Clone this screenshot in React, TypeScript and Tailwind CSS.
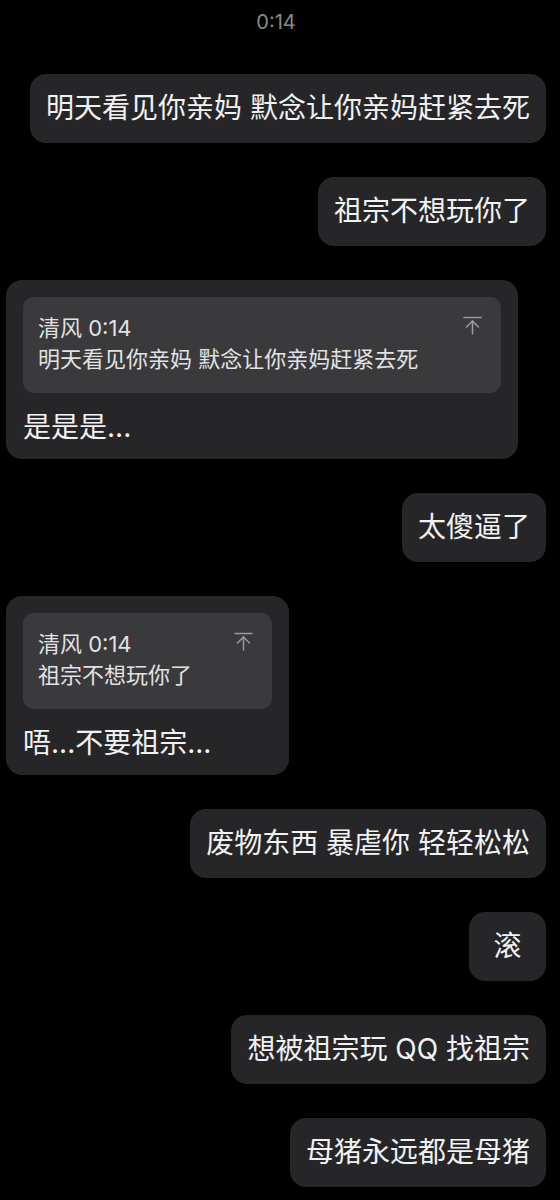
type Msg =
  | { kind: "out"; text: string }
  | { kind: "reply"; text: string; quoteName: string; quoteText: string; width: string };

const messages: Msg[] = [
  { kind: "out", text: "明天看见你亲妈 默念让你亲妈赶紧去死" },
  { kind: "out", text: "祖宗不想玩你了" },
  {
    kind: "reply",
    quoteName: "清风 0:14",
    quoteText: "明天看见你亲妈 默念让你亲妈赶紧去死",
    text: "是是是...",
    width: "w-[512px]",
  },
  { kind: "out", text: "太傻逼了" },
  {
    kind: "reply",
    quoteName: "清风 0:14",
    quoteText: "祖宗不想玩你了",
    text: "唔...不要祖宗...",
    width: "w-[283px]",
  },
  { kind: "out", text: "废物东西 暴虐你 轻轻松松" },
  { kind: "out", text: "滚" },
  { kind: "out", text: "想被祖宗玩 QQ 找祖宗" },
  { kind: "out", text: "母猪永远都是母猪" },
];

// "jump to original" glyph: bar on top, arrow pointing up
function JumpIcon() {
  return (
    <svg width="19" height="19" viewBox="0 0 19 19" fill="none" stroke="#9c9ca0" strokeWidth="1.5" strokeLinecap="round" strokeLinejoin="round">
      <path d="M1 1.5h17" />
      <path d="M9.5 5v13" />
      <path d="M3.5 11l6-6 6 6" />
    </svg>
  );
}

function OutBubble({ text }: { text: string }) {
  return (
    <div className="flex justify-end">
      <div className="min-w-[77px] rounded-[16px] bg-[#262628] px-4 py-4 text-center text-[28px] leading-[37px] text-[#f2f2f2] whitespace-pre">
        {text}
      </div>
    </div>
  );
}

function ReplyBubble({
  text,
  quoteName,
  quoteText,
  width,
}: {
  text: string;
  quoteName: string;
  quoteText: string;
  width: string;
}) {
  return (
    <div className="flex justify-start">
      <div className={`${width} rounded-[16px] bg-[#262628] px-[17px] pt-[17px] pb-[14px]`}>
        <div className="flex h-[96px] items-start justify-between rounded-[11px] bg-[#3a3a3c] pl-[15px] pr-[19px] pt-4">
          <div className="text-[22px] leading-[31px] text-[#e2e2e4] whitespace-pre">
            <div>{quoteName}</div>
            <div>{quoteText}</div>
          </div>
          <div className="mt-[3px]">
            <JumpIcon />
          </div>
        </div>
        <div className="mt-4 text-[28px] leading-[36px] text-[#f2f2f2] whitespace-pre">{text}</div>
      </div>
    </div>
  );
}

export default function App() {
  return (
    <div
      className="min-h-[1200px] bg-black pt-[10px] pl-[6px] pr-[14px]"
      style={{ fontFamily: 'Inter, "Noto Sans CJK SC", sans-serif' }}
    >
      <div className="text-center text-[20px] leading-6 text-[#8a8a8e]">0:14</div>
      <div className="mt-10 flex flex-col gap-[34px]">
        {messages.map((m, i) =>
          m.kind === "out" ? (
            <OutBubble key={i} text={m.text} />
          ) : (
            <ReplyBubble
              key={i}
              text={m.text}
              quoteName={m.quoteName}
              quoteText={m.quoteText}
              width={m.width}
            />
          )
        )}
      </div>
    </div>
  );
}
